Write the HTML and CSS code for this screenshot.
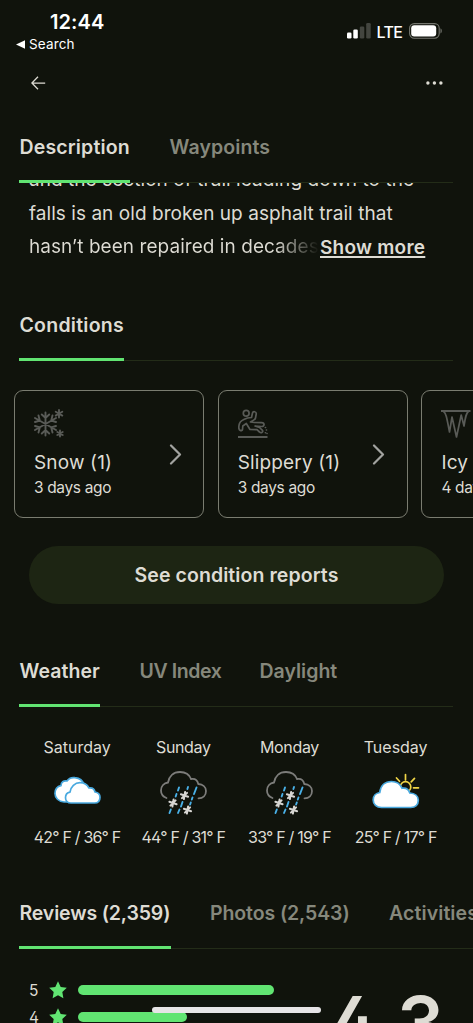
FILE: index.html
```html
<!DOCTYPE html>
<html lang="en">
<head>
<meta charset="utf-8">
<meta name="viewport" content="width=device-width, initial-scale=1">
<title>Trail details</title>
<link rel="stylesheet" href="styles.css">
</head>
<body>
<svg class="defs" width="0" height="0" aria-hidden="true">
  <defs>
    <g id="flake" fill="none" stroke="#d6d5d2" stroke-width="2" stroke-linecap="round">
      <path d="M.6-3.600-.6 3.600M-3.600-1.200 3.600 1.200M-2.600 2.600 2.600-2.600"/>
    </g>
    <g id="sleet">
      <path d="M6.500 27C2.800 25.500 1 22.500 1 19.500c0-4.500 3-7.500 7-8C9 5 13.500 1 20 1c5.500 0 9.500 3 11 7 4-.7 6.500 1.500 7.300 5 4.500.2 7.700 3 7.700 7 0 4.500-3 7.300-7.500 7.300" fill="none" stroke="#7c7c7a" stroke-width="1.800" stroke-linecap="round"/>
      <path d="M19 16.500 18 19.500M16.500 23l-.8 2.500M10.800 38.500 9.500 42M28 16l-.6 2M22.500 31l-1.500 4.500M19.500 38.500 18 42M36.500 16.500l-2.500 6.500M32.500 26.500l-.7 2M30.800 31.500l-.7 2" fill="none" stroke="#49b1e8" stroke-width="1.900" stroke-linecap="round"/>
      <use href="#flake" x="24.500" y="24.500"/>
      <use href="#flake" x="13" y="32"/>
      <use href="#flake" x="27.500" y="39"/>
    </g>
    <path id="star" d="M9 .3l2.700 5.700 6.100.8-4.500 4.300 1.100 6.200L9 14.300l-5.400 3 1.100-6.200L.2 6.800 6.300 6z"/>
  </defs>
</svg>
<div class="screen">
  <header class="status">
    <div class="status-left">
      <div class="clock">12:44</div>
      <div class="back-app"><svg width="9" height="9" viewBox="0 0 9 9"><path d="M0 4.500 9 .2v8.600z" fill="#fff"/></svg><span>Search</span></div>
    </div>
    <div class="status-right">
      <svg width="25" height="16" viewBox="0 0 25 16">
        <rect x="0" y="9.500" width="4.500" height="6" rx="1.300" fill="#fff"/>
        <rect x="6.300" y="6.500" width="4.500" height="9" rx="1.300" fill="#fff"/>
        <rect x="12.800" y="3.500" width="4.500" height="12" rx="1.300" fill="#43453f"/>
        <rect x="19.200" y="0" width="4.500" height="15.500" rx="1.300" fill="#43453f"/>
      </svg>
      <span class="lte">LTE</span>
      <svg width="34" height="16" viewBox="0 0 34 16">
        <rect x=".6" y=".6" width="29.600" height="14.600" rx="4.600" fill="none" stroke="#74766f" stroke-width="1.100"/>
        <rect x="2.200" y="2.200" width="25" height="11.400" rx="3" fill="#fff"/>
        <path d="M31.500 5.300c1.700.7 1.700 4.500 0 5.200z" fill="#74766f"/>
      </svg>
    </div>
  </header>
  <nav class="nav">
    <svg width="15" height="14" viewBox="0 0 15 14"><path d="M7 .8.9 7 7 13.200M1 7h13.200" fill="none" stroke="#dedcd4" stroke-width="1.250"/></svg>
    <svg width="18" height="4" viewBox="0 0 18 4" fill="#dedcd4"><circle cx="1.900" cy="2" r="1.700"/><circle cx="8.400" cy="2" r="1.700"/><circle cx="14.900" cy="2" r="1.700"/></svg>
  </nav>

  <div class="tabs">
    <div class="tab active t-description">Description</div>
    <div class="tab t-waypoints">Waypoints</div>
  </div>
  <section class="description">
    <div class="copy">
      <div class="line">and the section of trail leading down to the</div>
      <div class="line">falls is an old broken up asphalt trail that</div>
      <div class="line"><span class="fade">hasn’t been repaired in decades.</span><a class="more">Show more</a></div>
    </div>
  </section>

  <div class="tabs"><div class="tab active t-conditions">Conditions</div></div>
  <section class="cards">
    <article class="card">
      <svg width="30" height="30" viewBox="0 0 30 30" fill="none" stroke="#595b57" stroke-width="1.900" stroke-linecap="round">
        <path d="M11.500 3.500v23M1 9l21 12M1 21 22 9M7.800 5.500l3.700 3.500 3.700-3.500M7.800 24.500l3.700-3.500 3.700 3.500M1 13l4.800-1.400L4.500 6.500M18.500 23.500l-1.300-5.100L22 17M1 17l4.800 1.400-1.300 5.100M18.500 6.500l-1.300 5.100L22 13"/>
        <path d="M25 1v7.500M21.700 2.800l6.600 3.800M21.700 6.600l6.600-3.800M26 21.500v6M23.300 23l5.400 3M23.300 26l5.400-3"/>
      </svg>
      <div class="card-title">Snow (1)</div>
      <div class="card-sub">3 days ago</div>
      <svg class="chevron" width="13" height="21" viewBox="0 0 13 21"><path d="M2 1.500 11 10.500 2 19.500"/></svg>
    </article>
    <article class="card">
      <svg width="30" height="30" viewBox="0 0 30 30" fill="none" stroke="#595b57" stroke-width="1.700" stroke-linejoin="round" stroke-linecap="round">
        <circle cx="8.200" cy="4.200" r="2.900"/>
        <path d="M2.300 21.500C.5 20.500.7 17 1.500 14.500 2.500 11.500 6.500 10 9.500 9l4-.5 1-4.500c.5-2 3.800-1.500 3.800.7L17.500 9c-.3 2-2.500 2.500-5 4l4 .5 7 .2c3.500.3 3.300 4 0 3.800L17 17l4.500 1.500 3 2.800c1 2-1.500 3.200-3 1.700L19 20.700l-7-.2-3.700-6L4.800 17l-.3 3.500c-.2 1-1.200 1.500-2.200 1z"/>
        <path d="M0 28h29.500" stroke-width="2" stroke-linecap="butt"/>
        <path d="M27.300 18.500h.3M28.300 21h.3M27.300 23.800h.3M29 24.500h.1" stroke-width="1.500"/>
      </svg>
      <div class="card-title">Slippery (1)</div>
      <div class="card-sub">3 days ago</div>
      <svg class="chevron" width="13" height="21" viewBox="0 0 13 21"><path d="M2 1.500 11 10.500 2 19.500"/></svg>
    </article>
    <article class="card">
      <svg width="30" height="30" viewBox="0 0 30 30" fill="none" stroke="#595b57" stroke-width="1.700" stroke-linejoin="round">
        <path d="M0 2h29.500" stroke-width="2"/><path d="M2.500 2.500C5 4 5.700 8 8.500 23L11 8l4.500 20 4.700-22L23 17c1.500-9 2-13 4.500-14.500"/>
      </svg>
      <div class="card-title">Icy (1)</div>
      <div class="card-sub">4 days ago</div>
    </article>
  </section>
  <button class="reports">See condition reports</button>

  <div class="tabs">
    <div class="tab active t-weather">Weather</div>
    <div class="tab t-uv">UV Index</div>
    <div class="tab t-daylight">Daylight</div>
  </div>
  <section class="forecast">
    <div class="day"><div class="name">Saturday</div>
      <svg width="48" height="46" viewBox="0 0 48 46" fill="#fff" stroke="#49a9df" stroke-width="1.700" stroke-linejoin="round">
        <path d="M10 31c-5.500-.5-9-4-9-8.500 0-4 2.300-7 6-7.800C7 11 9.500 9.500 13 10c2-3 5-3.800 8-3.300 4.500.4 8 3.300 9.300 7.300C34 16 36 19 36 23l-3 8z"/>
        <path d="M17 32c-3.500 0-5.500-2.500-5.500-5.300 0-3.200 2-5 4.500-5.500.7-5.700 5-9.500 10-9.500 4.300 0 7.300 2 9 5.300 3.500-.5 5.500 1.500 6 4 3.500.5 5 2.500 5 5.200 0 3.300-2 5.800-5.500 5.800z"/>
      </svg><div class="temp">42° F / 36° F</div></div>
    <div class="day"><div class="name tight">Sunday</div>
      <svg width="48" height="46" viewBox="0 0 48 46"><use href="#sleet"/></svg><div class="temp">44° F / 31° F</div></div>
    <div class="day"><div class="name tight">Monday</div>
      <svg width="48" height="46" viewBox="0 0 48 46"><use href="#sleet"/></svg><div class="temp">33° F / 19° F</div></div>
    <div class="day"><div class="name">Tuesday</div>
      <svg width="48" height="46" viewBox="0 0 48 46" fill="none">
        <g stroke="#efd447" stroke-width="1.700" stroke-linecap="round"><circle cx="33.500" cy="16" r="5.300"/><path d="M33.500 3.500v5.500M24.500 7l3 3.300M42.500 7.300l-3.300 3.500M41.500 16.800h5"/></g>
        <path d="M9.500 36.500c-5 0-8.300-3-8.300-7.500 0-4 2.800-7 6.600-7.500C8.500 14.500 13 10.500 19.500 10.500c5 0 8.800 2.700 10.500 6.700 4-.6 6.800 1.300 7.800 4.800 5 .3 8.500 3 8.500 7.300 0 4.500-3 7.200-7.500 7.200z" fill="#fff" stroke="#49a9df" stroke-width="1.700"/>
      </svg><div class="temp">25° F / 17° F</div></div>
  </section>

  <div class="tabs wide">
    <div class="tab active t-reviews">Reviews (2,359)</div>
    <div class="tab t-photos">Photos (2,543)</div>
    <div class="tab t-activities">Activities</div>
  </div>
  <section class="ratings">
    <div class="histogram">
      <div class="row"><span>5</span><svg width="18" height="18" viewBox="0 0 18 18" fill="#61e472"><use href="#star"/></svg><i class="bar" style="width:196px"></i></div>
      <div class="row"><span>4</span><svg width="18" height="18" viewBox="0 0 18 18" fill="#61e472"><use href="#star"/></svg><i class="bar" style="width:109px"></i></div>
    </div>
    <div class="score">4.3</div>
  </section>
  <div class="home"></div>
</div>
</body>
</html>
```

FILE: styles.css
```css
* { box-sizing: border-box; }
body { margin: 0; background: #10130c; }
.defs { display: block; }
.screen {
  position: relative;
  width: 473px;
  height: 1023px;
  overflow: hidden;
  background: #10130c;
  color: #dedcd4;
  font-family: Inter, "Noto Sans", sans-serif;
  font-feature-settings: "cv02";
  white-space: nowrap;
}
svg { display: block; flex: none; }

.status { display: flex; justify-content: space-between; height: 64px; padding: 10px 30px 0 16px; color: #fff; font-feature-settings: normal; }
.clock { padding-left: 34px; font-size: 20px; line-height: 24px; font-weight: 600; letter-spacing: 0.1px; }
.back-app { display: flex; align-items: center; gap: 4px; font-size: 13.500px; line-height: 18px; padding-top: 1px; letter-spacing: 0.15px; }
.status-right { display: flex; height: 16px; margin-top: 13px; align-items: center; }
.lte { width: 37.500px; padding-left: 5px; font-size: 16px; font-weight: 500; letter-spacing: -0.6px; padding-top: 1px; }
.nav { display: flex; justify-content: space-between; align-items: center; height: 38px; margin-bottom: 31px; padding: 0 29px 0 31px; }

.tabs { display: flex; gap: 39px; height: 50px; margin: 0 20px 0 19px; background: linear-gradient(#232c18, #232c18) 0 48.500px / 100% 1px no-repeat; }
.tabs.wide { margin-right: 0; }
.tab { height: 50px; flex: none; font-size: 19.500px; line-height: 28px; font-weight: 580; color: #86887c; padding-left: 0.500px; }
.tab.active { color: #dedcd4; border-bottom: 3px solid #61e472; }
.t-description { width: 111px; letter-spacing: 0.15px; }
.t-waypoints { letter-spacing: 0.1px; }
.t-conditions { width: 105px; letter-spacing: 0.25px; }
.t-weather { width: 81px; letter-spacing: 0.05px; }
.t-uv { width: 81px; letter-spacing: -0.4px; }
.t-reviews { width: 151.500px; letter-spacing: -0.15px; }
.t-photos { width: 140px; letter-spacing: -0.1px; }
.t-activities { letter-spacing: 0.1px; }

.description { height: 128px; overflow: hidden; padding-left: 29px; }
.copy { margin-top: -20px; font-size: 19px; line-height: 33.500px; letter-spacing: 0.05px; }
.line { display: flex; height: 33.500px; }
.fade { width: 291px; overflow: hidden; background: linear-gradient(90deg, #dedcd4 245px, #10130c 290px); background-clip: text; -webkit-background-clip: text; color: transparent; }
.more { padding-top: 1px; font-weight: 600; letter-spacing: 0.25px; text-decoration: underline; text-underline-offset: 2px; text-decoration-thickness: 1.500px; }

.cards { display: flex; gap: 13.700px; padding: 29px 0 0 14px; }
.card { position: relative; flex: none; width: 190px; height: 128px; border: 1px solid #7a7c70; border-radius: 9px; padding: 18px 19px; }
.card-title { margin-top: 9px; font-size: 19px; line-height: 30px; letter-spacing: 0.15px; }
.card-sub { margin-top: -1px; font-size: 15.500px; line-height: 21px; letter-spacing: -0.35px; }
.chevron { position: absolute; right: 21.500px; top: 52.500px; fill: none; stroke: #a2a3a0; stroke-width: 2.200; stroke-linecap: round; stroke-linejoin: round; }
.reports { display: block; width: 415px; height: 58px; margin: 28px 0 53px 29px; padding: 1px 0 0; border: 0; border-radius: 29px; background: #1d2513; color: #dedcd4; font: 580 19.500px/57px Inter, sans-serif; letter-spacing: 0.08px; }

.forecast { display: grid; grid-template-columns: repeat(4, 106.200px); height: 192px; padding: 29px 0 0 24px; align-items: start; }
.day { display: flex; flex-direction: column; align-items: center; }
.name { font-size: 16px; line-height: 22px; }
.name.tight { letter-spacing: -0.35px; }
.day svg { margin: 13px 0 9px 1.500px; }
.temp { font-size: 16px; line-height: 22px; letter-spacing: -0.8px; }

.ratings { display: flex; justify-content: space-between; padding: 28px 29px 0 29px; }
.row { display: flex; align-items: center; height: 26.700px; font-size: 15.500px; }
.row span { width: 20px; }
.row svg { margin-right: 11px; }
.bar { height: 10px; border-radius: 5px; background: #61e472; }
.score { padding-top: 1px; font-size: 74px; line-height: 90px; font-weight: 560; }
.home { position: absolute; left: 152px; top: 1007px; width: 169px; height: 6px; border-radius: 3px; background: #e6e4e6; }
```
